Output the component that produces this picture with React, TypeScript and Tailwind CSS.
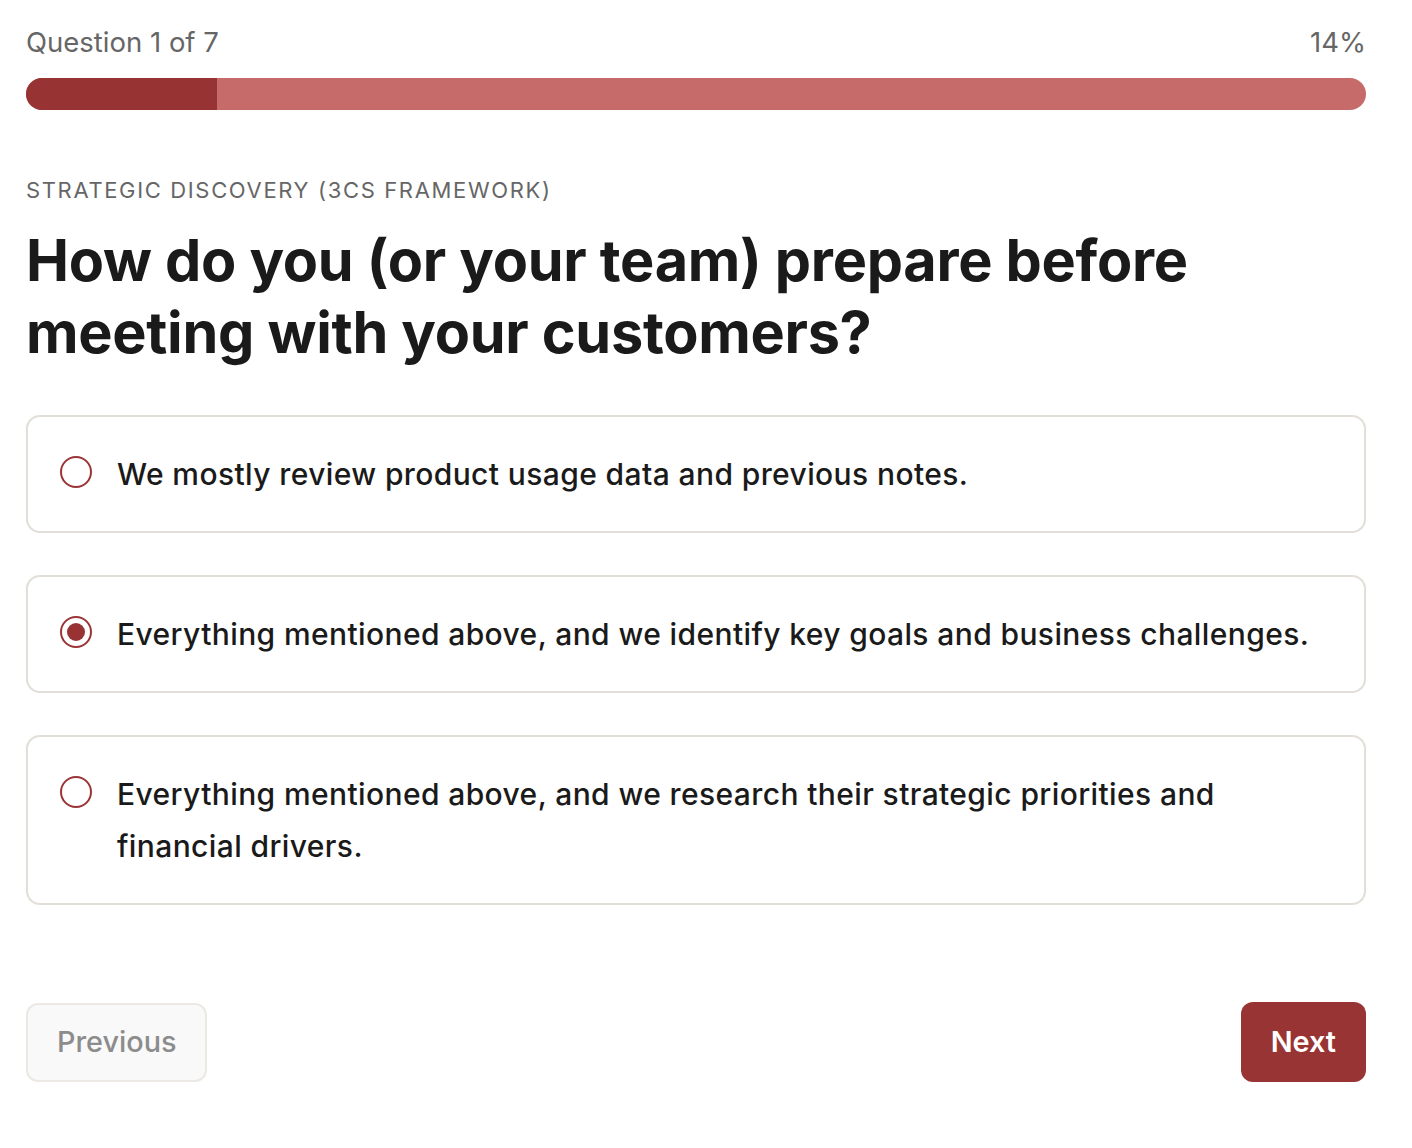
const options = [
  'We mostly review product usage data and previous notes.',
  'Everything mentioned above, and we identify key goals and business challenges.',
  'Everything mentioned above, and we research their strategic priorities and financial drivers.',
];

function Radio({ checked }: { checked: boolean }) {
  return (
    <span className="mt-[8px] flex h-[32px] w-[32px] shrink-0 items-center justify-center rounded-full border-2 border-[#9b3434]">
      {checked && <span className="h-[18px] w-[18px] rounded-full bg-[#993333]" />}
    </span>
  );
}

export default function App() {
  const selected = 1;
  const progress = 14;

  return (
    <div className="min-h-screen bg-white pl-[26px] pr-[46px] pt-[20px] font-['Inter',sans-serif] text-[#1a1a1a]">
      <div className="flex items-center justify-between text-[27.5px] leading-[44px] text-[#666666]">
        <span>Question 1 of 7</span>
        <span>{progress}%</span>
      </div>

      <div className="mt-[14px] h-[32px] w-full overflow-hidden rounded-full bg-[#c66a6a]">
        <div className="h-full bg-[#973333]" style={{ width: `${progress + 0.25}%` }} />
      </div>

      <div className="mt-[65px] text-[22px] uppercase leading-[30px] tracking-[0.075em] text-[#666666]">
        Strategic Discovery (3Cs Framework)
      </div>

      <h1 className="mt-[19px] text-[57.6px] font-bold leading-[72px] tracking-[-0.005em] text-[#1a1a1a]">
        How do you (or your team) prepare before meeting with your customers?
      </h1>

      <div className="mt-[47px] flex flex-col gap-[42px]">
        {options.map((text, i) => (
          <label
            key={i}
            className="flex cursor-pointer items-start gap-[25px] rounded-[14px] border-2 border-[#e2ded8] bg-white px-[32px] py-[31px]"
          >
            <Radio checked={i === selected} />
            <span className="text-[30px] font-medium leading-[52px] tracking-[0.013em] text-[#1a1a1a]">
              {text}
            </span>
          </label>
        ))}
      </div>

      <div className="mt-[97px] flex items-center justify-between pb-[40px]">
        <button
          disabled
          className="h-[79px] rounded-[12px] border-2 border-[#ece8e4] bg-[#f9f9f9] px-[29px] text-[28.8px] font-medium text-[#8c8c8c]"
        >
          Previous
        </button>
        <button className="h-[80px] rounded-[12px] bg-[#983434] px-[30px] text-[28.8px] font-semibold text-white">
          Next
        </button>
      </div>
    </div>
  );
}
